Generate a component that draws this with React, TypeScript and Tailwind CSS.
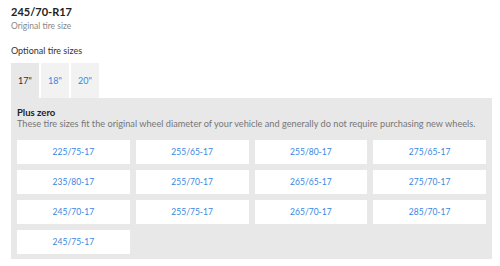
import React from "react";

const sizes = [
  "225/75-17", "255/65-17", "255/80-17", "275/65-17",
  "235/80-17", "255/70-17", "265/65-17", "275/70-17",
  "245/70-17", "255/75-17", "265/70-17", "285/70-17",
  "245/75-17",
];

const tabs = ["17\"", "18\"", "20\""];

export default function App() {
  return (
    <div className="w-[500px] h-[266px] bg-white pl-[11px] pt-[5px] overflow-hidden text-[#222]" style={{ fontFamily: "Lato, 'Open Sans', sans-serif" }}>
      <h1 className="text-[11px] font-bold leading-[14px]">245/70-R17</h1>
      <p className="text-[8.5px] leading-[10px] text-[#888] mt-[2px]">Original tire size</p>
      <h2 className="text-[9px] leading-[12px] mt-[14px] text-[#333]">Optional tire sizes</h2>

      <div className="flex gap-[2px] mt-[6px]">
        {tabs.map((t, i) => (
          <div
            key={t}
            className={
              i === 0
                ? "w-[28px] h-[35px] flex items-center justify-center text-[9px] text-[#333] bg-[#e8e8e8]"
                : "w-[28px] h-[35px] flex items-center justify-center text-[9px] text-[#3887e2] bg-[#f2f2f2]"
            }
          >
            {t}
          </div>
        ))}
      </div>

      <div className="w-[481px] bg-[#e8e8e8] px-[6px] pt-[9px] pb-[5px]">
        <h3 className="text-[9.5px] font-bold leading-[11px] text-[#222]">Plus zero</h3>
        <p className="text-[9.2px] leading-[11px] text-[#777]">
          These tire sizes fit the original wheel diameter of your vehicle and generally do not require purchasing new wheels.
        </p>
        <div className="grid grid-cols-4 gap-[6px] mt-[11px]">
          {sizes.map((s) => (
            <div key={s} className="h-[24px] bg-white flex items-center justify-center text-[8.5px] text-[#3887e2]">
              {s}
            </div>
          ))}
        </div>
      </div>
    </div>
  );
}
